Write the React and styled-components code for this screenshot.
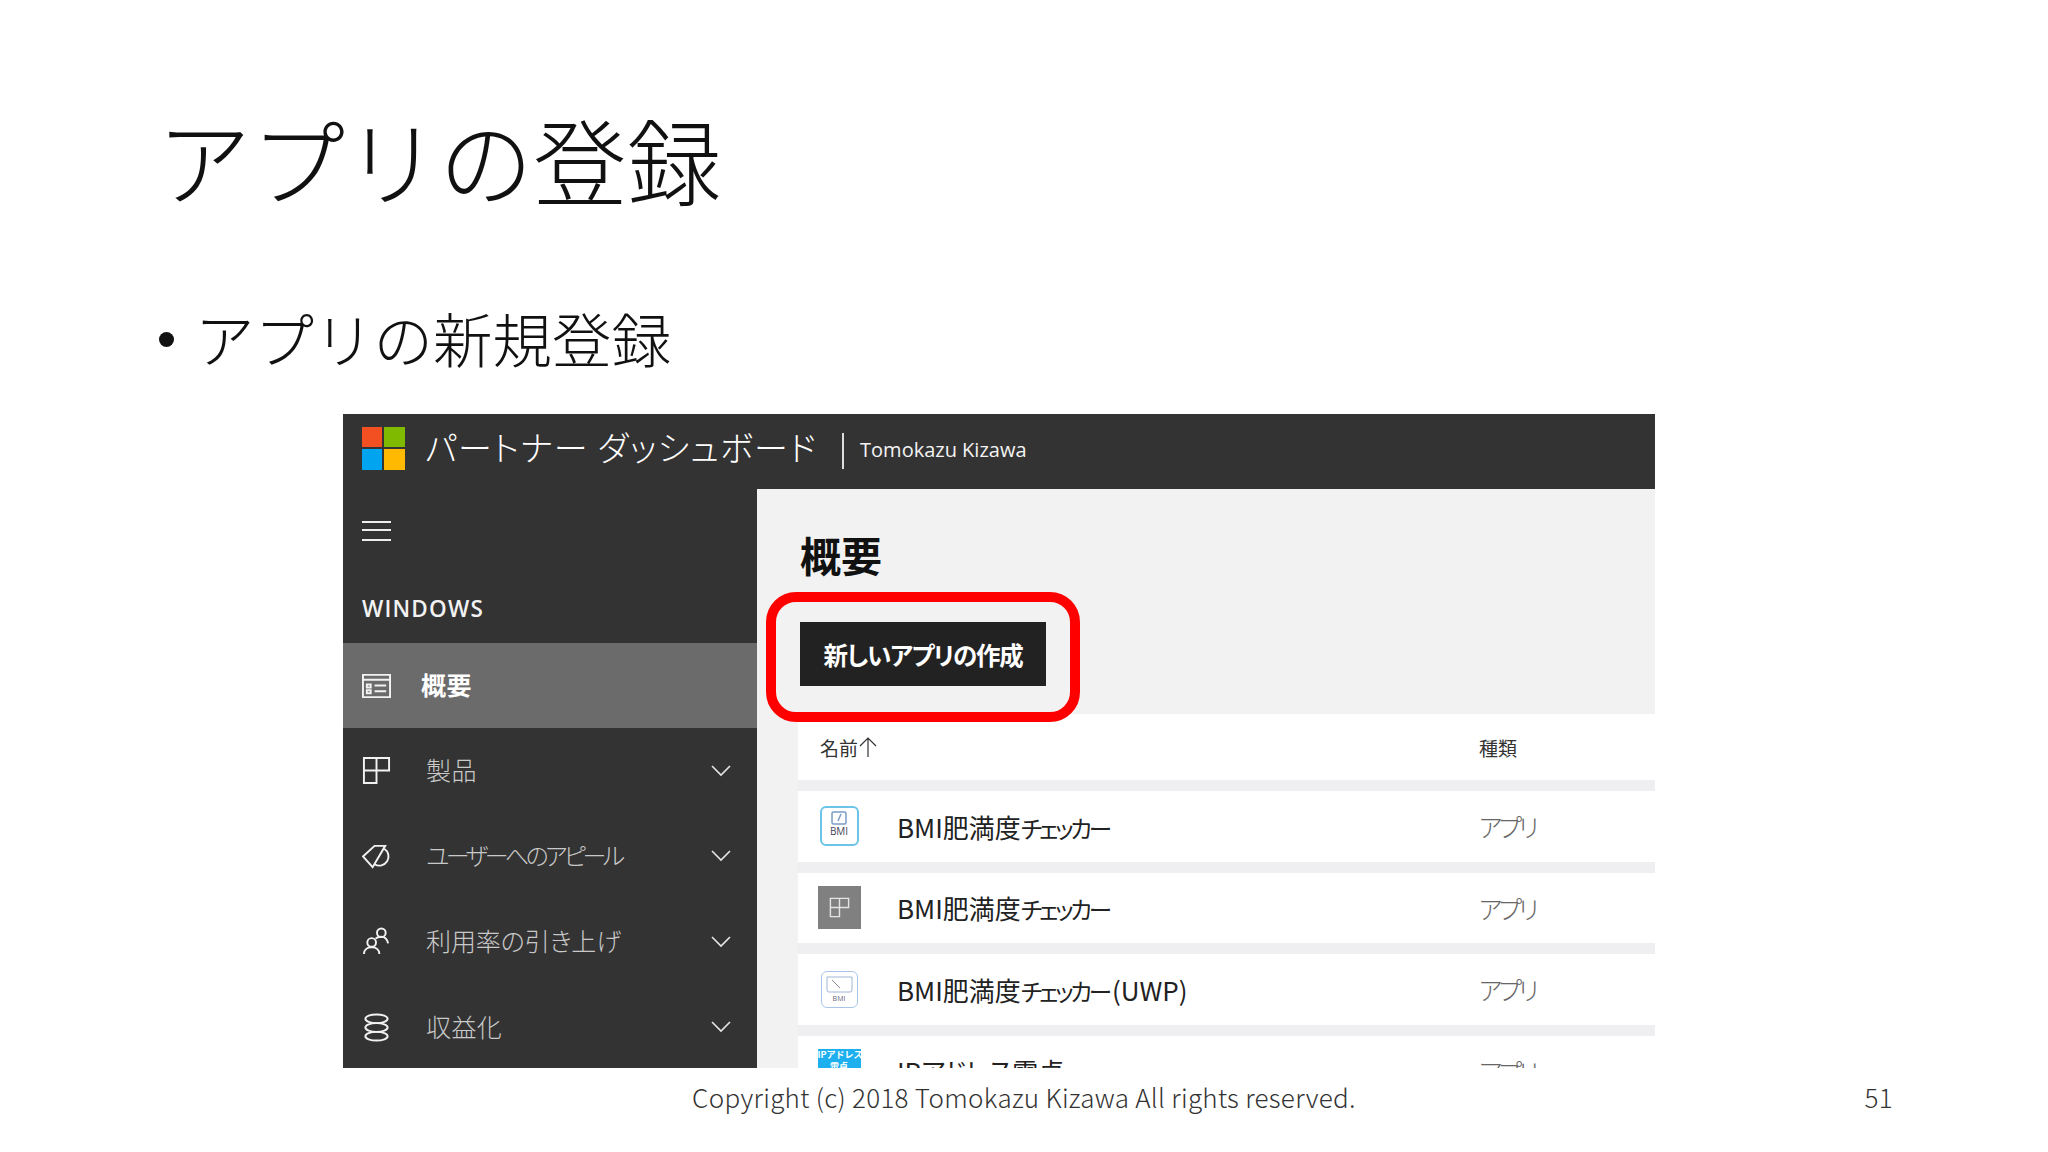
import React from "react";
import styled, { createGlobalStyle } from "styled-components";

const JP = `"Noto Sans CJK JP", "Noto Sans", sans-serif`;
const UI = `"Open Sans", "Noto Sans CJK JP", sans-serif`;

const Global = createGlobalStyle`
  html, body { margin: 0; padding: 0; background: #fff; }
  body { font-family: ${JP}; }
`;

const Slide = styled.div`
  width: 2048px;
  height: 1152px;
  overflow: hidden;
  display: flex;
  flex-direction: column;
  background: #fff;
  color: #111;
`;

const Title = styled.h1`
  margin: 96px 0 0 157px;
  font-size: 94px;
  line-height: 124px;
  font-weight: 300;
  letter-spacing: 0;
`;

const Bullet = styled.div`
  margin: 77px 0 0 159px;
  display: flex;
  align-items: center;
  gap: 21px;
  font-size: 59.5px;
  line-height: 80px;
  font-weight: 300;
`;

const Dot = styled.span`
  width: 15px;
  height: 15px;
  border-radius: 50%;
  background: #111;
  margin-top: 4px;
`;

const Shot = styled.div`
  position: relative;
  margin: 37px 0 0 343px;
  width: 1312px;
  height: 654px;
  overflow: hidden;
  background: #f2f2f2;
  display: grid;
  grid-template-columns: 414px 1fr;
  grid-template-rows: 75px 1fr;
`;

const TopBar = styled.header`
  grid-column: 1 / 3;
  background: #333;
  color: #fff;
  display: flex;
  align-items: center;
  padding: 0 0 7px 19px;
`;

const LogoBox = styled.svg`
  width: 43px;
  height: 43px;
  margin-right: 20px;
`;

const BarTitle = styled.span`
  font-size: 34px;
  font-weight: 300;
  letter-spacing: 1.2px;
  font-feature-settings: "palt";
  white-space: nowrap;
  margin-bottom: 3px;
`;

const BarDivider = styled.span`
  width: 2px;
  height: 36px;
  background: #ddd;
  margin: 5px 16px 0 25px;
`;

const BarUser = styled.span`
  font-family: ${UI};
  font-size: 20px;
  color: #f4f4f4;
  margin-top: 2px;
`;

const Sidebar = styled.nav`
  background: #333;
  color: #d8d8d8;
  display: flex;
  flex-direction: column;
`;

const Burger = styled.div`
  margin: 32px 0 0 19px;
  width: 29px;
  height: 16px;
  border-top: 2px solid #eee;
  border-bottom: 2px solid #eee;
  position: relative;
  &::after {
    content: "";
    position: absolute;
    left: 0;
    right: 0;
    top: 6px;
    height: 2px;
    background: #eee;
  }
`;

const Section = styled.div`
  margin: 52px 0 0 19px;
  height: 50px;
  font-family: ${UI};
  font-size: 22.5px;
  line-height: 32px;
  font-weight: 600;
  letter-spacing: 1.2px;
  color: #f2f2f2;
`;

const Item = styled.div`
  height: ${(p) => (p.$active ? 85 : 85.5)}px;
  flex: none;
  display: flex;
  align-items: center;
  padding-left: 19px;
  background: ${(p) => (p.$active ? "#6b6b6b" : "transparent")};
  color: ${(p) => (p.$active ? "#fff" : "#c9c9c9")};
`;

const ItemIcon = styled.svg`
  width: 29px;
  height: 29px;
  flex: none;
  fill: none;
  stroke: #f2f2f2;
  stroke-width: 2;
`;

const ItemLabel = styled.span`
  margin: 0 0 3px ${(p) => (p.$active ? 30 : 35)}px;
  flex: 1;
  font-size: ${(p) => p.$size ?? 25}px;
  font-weight: ${(p) => (p.$active ? 700 : 300)};
  font-feature-settings: "palt";
  letter-spacing: ${(p) => p.$spacing ?? 0.4}px;
  white-space: nowrap;
`;

const Chevron = styled.svg`
  width: 20px;
  height: 12px;
  margin-right: 26px;
  fill: none;
  stroke: #e6e6e6;
  stroke-width: 1.6;
`;

const Main = styled.main`
  background: #f2f2f2;
  display: flex;
  flex-direction: column;
  padding-left: 41px;
`;

const Heading = styled.h2`
  margin: 40px 0 0 2px;
  font-size: 41px;
  line-height: 50px;
  font-weight: 700;
  color: #111;
`;

const CreateButton = styled.div`
  margin: 43px 0 0 2px;
  width: 246px;
  height: 64px;
  box-sizing: border-box;
  background: #222;
  color: #fff;
  display: flex;
  align-items: center;
  justify-content: center;
  font-size: 24.5px;
  font-weight: 700;
  letter-spacing: -1.2px;
  font-feature-settings: "palt";
`;

const Highlight = styled.div`
  position: absolute;
  left: 423px;
  top: 178px;
  width: 314px;
  height: 130px;
  box-sizing: border-box;
  border: 10px solid #f00;
  border-radius: 30px;
`;

const Table = styled.div`
  margin-top: 28px;
  display: flex;
  flex-direction: column;
  gap: 11px;
  background: #efeef0;
`;

const Row = styled.div`
  height: ${(p) => (p.$head ? 66 : 70.5)}px;
  flex: none;
  background: #fff;
  display: grid;
  grid-template-columns: 659px 1fr;
  align-items: center;
  padding-left: 22px;
`;

const NameCell = styled.div`
  display: flex;
  align-items: center;
  min-width: 0;
`;

const HeadText = styled.span`
  display: inline-flex;
  align-items: center;
  font-size: 19px;
  color: #333;
`;

const IconSlot = styled.div`
  width: 44px;
  height: 44px;
  flex: none;
  margin: 0 36px 0 -3px;
  display: flex;
  align-items: center;
  justify-content: center;
`;

const AppName = styled.span`
  font-size: 26px;
  font-weight: 400;
  font-feature-settings: "palt";
  color: #222;
  white-space: nowrap;
`;

const Kana = styled.span`
  font-size: 23.5px;
  letter-spacing: -3.2px;
  margin-right: 3px;
`;

const AppType = styled.span`
  font-size: 25px;
  font-weight: 300;
  color: #666;
  letter-spacing: -3.5px;
  font-feature-settings: "palt";
`;

const BmiTile = styled.div`
  width: 39px;
  height: 40px;
  box-sizing: border-box;
  border: 2px solid #6cc4e8;
  border-radius: 6px;
  display: flex;
  flex-direction: column;
  align-items: center;
  padding-top: 3px;
  font-family: ${UI};
  font-size: 10px;
  line-height: 12px;
  color: #445;
`;

const GreyTile = styled.div`
  width: 43px;
  height: 43px;
  background: #808080;
  display: flex;
  align-items: center;
  justify-content: center;
`;

const SoftTile = styled.div`
  width: 37px;
  height: 37px;
  box-sizing: border-box;
  border: 1px solid #a9c6ea;
  border-radius: 6px;
  display: flex;
  flex-direction: column;
  align-items: center;
  padding-top: 4px;
  font-family: ${UI};
  font-size: 7px;
  line-height: 12px;
  color: #667;
`;

const BlueTile = styled.div`
  width: 43px;
  height: 43px;
  background: #1eb0ee;
  color: #fff;
  font-size: 9px;
  line-height: 12px;
  font-weight: 700;
  text-align: center;
  white-space: nowrap;
  overflow: hidden;
`;

const Footer = styled.footer`
  display: grid;
  grid-template-columns: 1fr auto 1fr;
  align-items: center;
  margin-top: 11px;
  font-size: 26px;
  line-height: 36px;
  font-weight: 300;
  color: #333;
  letter-spacing: 0.3px;
`;

const PageNo = styled.span`
  justify-self: end;
  margin-right: 155px;
`;

const ProductGlyph = ({ size = 30, color = "#f2f2f2" }) => (
  <svg width={size} height={size} viewBox="0 0 30 30" fill="none" stroke={color} strokeWidth="2">
    <path d="M2 2h26v13H15V28H2zM2 15h13M15 2v13" />
  </svg>
);

const items = [
  {
    label: "製品",
    icon: <path d="M2 2h26v13H15V28H2zM2 15h13M15 2v13" />,
  },
  {
    label: "ユーザーへのアピール",
    size: 24,
    spacing: -3.6,
    icon: (
      <>
        <path d="M1 15 13 4h11L11 26z" />
        <path d="M23 7a8.500 8.500 0 1 1-10 16" />
      </>
    ),
  },
  {
    label: "利用率の引き上げ",
    spacing: -0.1,
    icon: (
      <>
        <circle cx="20" cy="6" r="4.500" />
        <circle cx="10" cy="16" r="4.500" />
        <path d="M2 28c0-4 3-7 8-7s8 3 8 7M14 12c1-1 3-2 6-2s6 2 7 7" />
      </>
    ),
  },
  {
    label: "収益化",
    icon: (
      <>
        <ellipse cx="15" cy="6" rx="11.500" ry="4.500" />
        <ellipse cx="15" cy="15" rx="11.500" ry="4.500" />
        <ellipse cx="15" cy="24" rx="11.500" ry="4.500" />
      </>
    ),
  },
];

const apps = [
  {
    name: "BMI肥満度",
    kana: "チェッカー",
    tile: (
      <BmiTile>
        <svg width="16" height="14" viewBox="0 0 16 14" fill="none" stroke="#7a9cc6" strokeWidth="1.500">
          <rect x="1" y="1" width="14" height="12" rx="1.500" />
          <path d="M10 3 7 10" />
        </svg>
        BMI
      </BmiTile>
    ),
  },
  {
    name: "BMI肥満度",
    kana: "チェッカー",
    tile: (
      <GreyTile>
        <ProductGlyph size={21} color="#e4e4e4" />
      </GreyTile>
    ),
  },
  {
    name: "BMI肥満度",
    kana: "チェッカー",
    rest: "(UWP)",
    tile: (
      <SoftTile>
        <svg width="27" height="17" viewBox="0 0 27 17" fill="none" stroke="#9fb6d6" strokeWidth="1">
          <path d="M1 1h25v13q0 2-2 2H3q-2 0-2-2z" />
          <path d="M6 4l8 8" stroke="#889" />
        </svg>
        BMI
      </SoftTile>
    ),
  },
  {
    name: "IPアドレス電卓",
    tile: (
      <BlueTile>
        IPアドレス
        <br />
        電卓
      </BlueTile>
    ),
  },
];

export default function App() {
  return (
    <>
      <Global />
      <Slide>
        <Title>アプリの登録</Title>
        <Bullet>
          <Dot />
          アプリの新規登録
        </Bullet>
        <Shot>
          <TopBar>
            <LogoBox viewBox="0 0 43 43">
              <rect x="0" y="0" width="20" height="20" fill="#f25022" />
              <rect x="22" y="0" width="21" height="20" fill="#7fba00" />
              <rect x="0" y="22" width="20" height="21" fill="#00a4ef" />
              <rect x="22" y="22" width="21" height="21" fill="#ffb900" />
            </LogoBox>
            <BarTitle>パートナー ダッシュボード</BarTitle>
            <BarDivider />
            <BarUser>Tomokazu Kizawa</BarUser>
          </TopBar>
          <Sidebar>
            <Burger />
            <Section>WINDOWS</Section>
            <Item $active>
              <ItemIcon viewBox="0 0 30 30">
                <path d="M1 4h28v23H1zM1 9h28M5 14h4v3H5zM5 20h4v3H5zM13 15h12M13 21h12" />
              </ItemIcon>
              <ItemLabel $active>概要</ItemLabel>
            </Item>
            {items.map((item) => (
              <Item key={item.label}>
                <ItemIcon viewBox="0 0 30 30">{item.icon}</ItemIcon>
                <ItemLabel $spacing={item.spacing} $size={item.size}>{item.label}</ItemLabel>
                <Chevron viewBox="0 0 20 12">
                  <path d="M1 1l9 9 9-9" />
                </Chevron>
              </Item>
            ))}
          </Sidebar>
          <Main>
            <Heading>概要</Heading>
            <CreateButton>新しいアプリの作成</CreateButton>
            <Table>
              <Row $head>
                <NameCell>
                  <HeadText>
                    名前
                    <svg width="20" height="24" viewBox="0 0 20 24" fill="none" stroke="#333" strokeWidth="1.2">
                      <path d="M10 22V3M2 11l8-8 8 8" />
                    </svg>
                  </HeadText>
                </NameCell>
                <HeadText>種類</HeadText>
              </Row>
              {apps.map((app, i) => (
                <Row key={i}>
                  <NameCell>
                    <IconSlot>{app.tile}</IconSlot>
                    <AppName>
                      {app.name}
                      {app.kana && <Kana>{app.kana}</Kana>}
                      {app.rest}
                    </AppName>
                  </NameCell>
                  <AppType>アプリ</AppType>
                </Row>
              ))}
            </Table>
          </Main>
          <Highlight />
        </Shot>
        <Footer>
          <span />
          <span>Copyright (c) 2018 Tomokazu Kizawa All rights reserved.</span>
          <PageNo>51</PageNo>
        </Footer>
      </Slide>
    </>
  );
}
